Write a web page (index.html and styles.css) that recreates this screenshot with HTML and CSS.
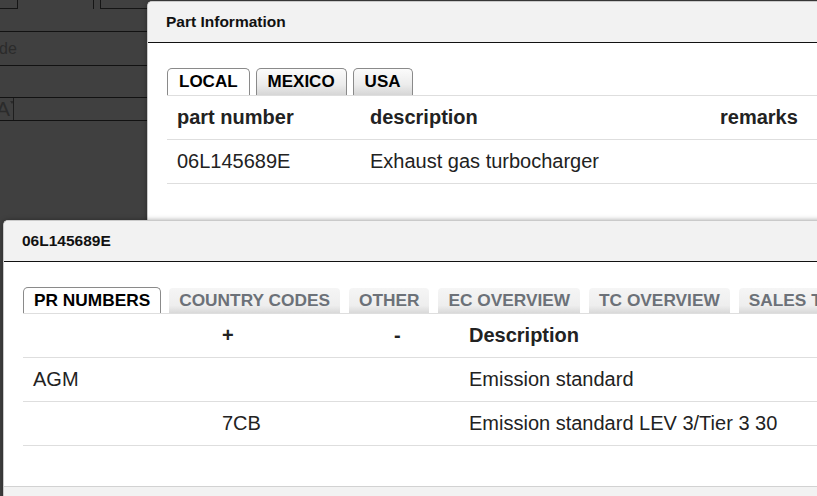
FILE: index.html
```html
<!DOCTYPE html>
<html lang="en">
<head>
<meta charset="utf-8">
<title>Part Information</title>
<link rel="stylesheet" href="styles.css">
</head>
<body>
<div class="page">
  <div class="topstrip">
    <div class="tb tb1"></div>
    <div class="tb tb2"></div>
    <div class="tb tb3"></div>
  </div>
  <div class="bgrow r1"></div>
  <div class="bgrow r2"><span class="bgtext">de</span></div>
  <div class="bgrow r3"></div>
  <div class="bgrow r4"><span class="sel"><span class="sel-a">A</span><span class="caret"></span></span></div>
</div>

<section class="dialog d1">
  <header class="dlg-head">Part Information</header>
  <div class="dlg-body">
    <div class="tabs tabs1">
      <div class="tab active">LOCAL</div>
      <div class="tab">MEXICO</div>
      <div class="tab">USA</div>
    </div>
    <div class="grid g1">
      <div class="row head"><div class="c">part number</div><div class="c">description</div><div class="c">remarks</div></div>
      <div class="row"><div class="c">06L145689E</div><div class="c">Exhaust gas turbocharger</div><div class="c"></div></div>
    </div>
  </div>
</section>

<section class="dialog d2">
  <header class="dlg-head">06L145689E</header>
  <div class="dlg-body">
    <div class="tabs tabs2">
      <div class="tab active">PR NUMBERS</div>
      <div class="tab">COUNTRY CODES</div>
      <div class="tab">OTHER</div>
      <div class="tab">EC OVERVIEW</div>
      <div class="tab">TC OVERVIEW</div>
      <div class="tab">SALES TYPES</div>
    </div>
    <div class="grid g2">
      <div class="row head"><div class="c"></div><div class="c">+</div><div class="c">-</div><div class="c">Description</div></div>
      <div class="row"><div class="c">AGM</div><div class="c"></div><div class="c"></div><div class="c">Emission standard</div></div>
      <div class="row"><div class="c"></div><div class="c">7CB</div><div class="c"></div><div class="c">Emission standard LEV 3/Tier 3 30</div></div>
    </div>
  </div>
  <footer class="dlg-foot"></footer>
</section>
</body>
</html>
```

FILE: styles.css
```css
* { box-sizing: border-box; }

html, body {
  margin: 0;
  padding: 0;
  height: 100%;
  overflow: hidden;
}

body {
  background: #404040;
  font-family: "Liberation Sans", Arial, sans-serif;
}

/* dimmed page behind the dialogs */
.page {
  width: 100%;
}

.topstrip {
  display: flex;
  height: 9px;
}

.tb {
  height: 9px;
  border-color: #151515;
  border-style: solid;
  border-width: 0;
}

.tb1 {
  width: 18px;
  border-right-width: 1px;
  border-bottom-width: 1px;
}

.tb2 {
  width: 7px;
  margin-left: 75px;
  border-left-width: 1px;
}

.tb3 {
  flex: 1;
  border-left-width: 1px;
  border-bottom-width: 1px;
}

.bgrow {
  border-bottom: 1px solid #121212;
  overflow: hidden;
  display: flex;
  align-items: center;
}

.r1 { height: 23px; }
.r2 { height: 34px; }
.r3 { height: 32px; }
.r4 { height: 23px; }

.bgtext {
  font-size: 16px;
  color: #2b2b2b;
  margin-left: -1px;
}

.sel {
  display: flex;
  align-items: flex-start;
  width: 14px;
  height: 100%;
  border-right: 1px solid #1e1e1e;
  overflow: hidden;
}

.sel-a {
  font-size: 21px;
  line-height: 22px;
  color: #2b2b2b;
  margin-left: -4px;
}

.caret {
  flex: none;
  width: 0;
  height: 0;
  margin-top: 3px;
  border-left: 2px solid transparent;
  border-right: 2px solid transparent;
  border-top: 3px solid #2b2b2b;
}

/* dialogs */
.dialog {
  position: absolute;
  background: #fff;
  border: 1px solid #cacaca;
  border-right: 0;
  border-radius: 5px 0 0 0;
  box-shadow: 0 0 5px rgba(0, 0, 0, 0.35);
  overflow: hidden;
}

.d1 {
  left: 147px;
  top: 1px;
  width: 720px;
}

.d2 {
  left: 3px;
  top: 220px;
  width: 900px;
}

.dlg-head {
  height: 41px;
  background: #f2f2f2;
  border-bottom: 1px solid #111;
  display: flex;
  align-items: center;
  padding-left: 18px;
  font-weight: bold;
  font-size: 15.5px;
  color: #111;
}

.dlg-body {
  padding: 25px 19px 40px;
}

.dlg-foot {
  height: 40px;
  background: #f2f2f2;
  border-top: 1px solid #d2d2d2;
}

/* tabs */
.tabs {
  display: flex;
  border-bottom: 1px solid #dedede;
  white-space: nowrap;
}

.tab {
  flex: none;
  font-weight: bold;
  line-height: 20px;
  border: 1px solid #8a8a8a;
  border-bottom: 0;
  border-radius: 5px 5px 0 0;
}

.tabs1 {
  gap: 6px;
}

.tabs1 .tab {
  font-size: 17px;
  padding: 3px 11px;
  color: #000;
  background: linear-gradient(#fbfbfb, #ececec 60%, #d6d6d6);
}

.tabs1 .tab.active {
  background: #fff;
}

.tabs2 {
  gap: 7px;
}

.tabs2 .tab {
  font-size: 17.3px;
  padding: 2px 10px 3px;
  color: #6c7178;
  border-color: transparent;
  background: linear-gradient(#f5f5f5, #eeeeee 70%, #d9d9d9);
  background-clip: padding-box;
}

.tabs2 .tab.active {
  color: #000;
  border-color: #8a8a8a;
  background: #fff;
}

/* data grids */
.row {
  display: grid;
  height: 44px;
  align-items: center;
  border-bottom: 1px solid #dedede;
  font-size: 20px;
  color: #222;
  white-space: nowrap;
}

.row.head {
  font-weight: bold;
}

.g1 .row {
  grid-template-columns: 193px 350px 1fr;
}

.g2 .row {
  grid-template-columns: 189px 172px 75px 1fr;
}

.c {
  padding: 0 10px;
}
```
